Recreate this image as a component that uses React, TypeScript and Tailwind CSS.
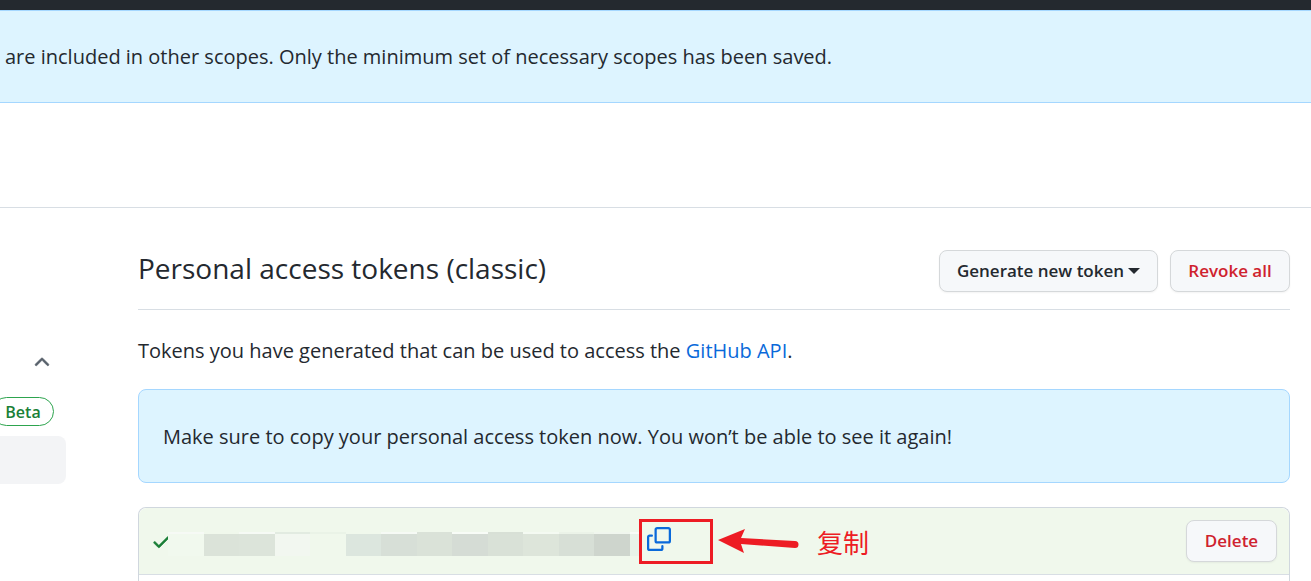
import React from "react";

const tiles = [
  { strip: "bg-[#f6faf5]", body: "bg-[#f1f9ee]" },
  { strip: "bg-[#f0f8ec]", body: "bg-[#dbe3d9]" },
  { strip: "bg-[#f6faf5]", body: "bg-[#dce4da]" },
  { strip: "bg-[#e2ebe1]", body: "bg-[#f2f7f0]" },
  { strip: "bg-[#eaf3e7]", body: "bg-[#f0f8ec]" },
  { strip: "bg-[#f0f8ec]", body: "bg-[#dce6de]" },
  { strip: "bg-[#f6faf5]", body: "bg-[#d7dfd7]" },
  { strip: "bg-[#dae2d8]", body: "bg-[#dae2d8]" },
  { strip: "bg-[#f8fcf7]", body: "bg-[#d5dcd5]" },
  { strip: "bg-[#d8e0d6]", body: "bg-[#d9e1d7]" },
  { strip: "bg-[#f4faf2]", body: "bg-[#dde5da]" },
  { strip: "bg-[#ebf3e8]", body: "bg-[#d7dfd6]" },
  { strip: "bg-[#f0f6ee]", body: "bg-[#ced5cd]" },
];

const buttonBase =
  "flex h-[42px] items-center justify-center rounded-lg border border-[#d5d8da] bg-[#f6f8fa] text-[17px] font-semibold shadow-xs";

function MaskedToken() {
  return (
    <div className="flex w-[471px] shrink-0" aria-hidden="true">
      <div className="flex w-[462px] shrink-0">
        {tiles.map((tile, i) => (
          <div key={i} className="flex h-6 flex-1 flex-col">
            <div className={`h-[2px] ${tile.strip}`} />
            <div className={`flex-1 ${tile.body}`} />
          </div>
        ))}
      </div>
      <div className="flex flex-1 flex-col">
        <div className="h-[2px] bg-[#f8fcf7]" />
        <div className="flex-1 bg-[#e8f3e9]" />
      </div>
    </div>
  );
}

export default function App() {
  return (
    <div className="min-h-screen overflow-x-hidden bg-white font-['Open_Sans','Noto_Sans_CJK_SC',sans-serif] text-[20px] leading-8 text-[#24292f]">
      <header className="h-[10px] bg-[#24292f]" />
      <div className="border-y border-[#a5d7ff] bg-[#ddf4ff] pt-[30px] pb-[29px] pl-[5px] whitespace-nowrap">
        are included in other scopes. Only the minimum set of necessary scopes has been saved.
      </div>
      <div className="h-[104px]" />
      <div className="flex gap-[72px] border-t border-[#d8dee4] pr-[21px]">
        <nav className="w-[66px] shrink-0 pt-[142px]" aria-label="Settings">
          <button className="ml-[31px] block h-[26px]" aria-label="Collapse section">
            <svg width="22" height="22" viewBox="0 0 16 16" fill="#57606a" stroke="#57606a" strokeWidth="0.4">
              <path d="M3.22 9.78a.75.75 0 010-1.06l4.25-4.25a.75.75 0 011.06 0l4.25 4.25a.75.75 0 01-1.06 1.06L8 6.06 4.28 9.78a.75.75 0 01-1.06 0z" />
            </svg>
          </button>
          <span className="mt-[21px] -ml-2 flex h-[29px] w-[62px] items-center justify-center rounded-full border border-[#2da44e] text-base font-semibold text-[#1a7f37]">
            Beta
          </span>
          <div className="mt-[10px] h-12 rounded-r-lg bg-[#f3f4f6]" />
        </nav>
        <main className="min-w-0 flex-1 pt-[42px]">
          <div className="flex h-[60px] items-start justify-between border-b border-[#d8dee4]">
            <h1 className="text-[28px] leading-9 whitespace-nowrap">Personal access tokens (classic)</h1>
            <div className="flex shrink-0 gap-3">
              <button className={`${buttonBase} w-[219px] gap-1 whitespace-nowrap`}>
                Generate new token
                <svg width="12" height="6" viewBox="0 0 12 6" fill="#24292f">
                  <path d="M0 0h12L6 6z" />
                </svg>
              </button>
              <button className={`${buttonBase} w-[120px] whitespace-nowrap text-[#cf222e]`}>Revoke all</button>
            </div>
          </div>
          <p className="mt-[25px] whitespace-nowrap">
            Tokens you have generated that can be used to access the{" "}
            <a href="#api" className="text-[#0969da]">GitHub API</a>.
          </p>
          <div className="mt-[22px] rounded-lg border border-[#a5d7ff] bg-[#ddf4ff] px-6 pt-[31px] pb-[29px] whitespace-nowrap">
            Make sure to copy your personal access token now. You won’t be able to see it again!
          </div>
          <div className="mt-6 rounded-t-lg border border-b-0 border-[#d0d7de]">
            <div className="flex h-[67px] items-center rounded-t-lg border-b border-[#d8dee4] bg-[#f0f8ec] pr-3">
              <svg className="ml-3 shrink-0" width="21" height="21" viewBox="0 0 16 16" fill="#1a7f37" stroke="#1a7f37" strokeWidth="0.4" aria-label="Created">
                <path d="M13.78 4.22a.75.75 0 010 1.06l-7.25 7.25a.75.75 0 01-1.06 0L2.22 9.28a.75.75 0 011.06-1.06L6 10.94l6.72-6.72a.75.75 0 011.06 0z" />
              </svg>
              <div className="-ml-1 pt-[6px]">
                <MaskedToken />
              </div>
              <button className="flex h-[45px] w-[74px] shrink-0 items-start border-3 border-[#ed1c24] pt-[5px] pl-[5px]" aria-label="Copy token">
                <svg width="24" height="24" viewBox="0 0 16 16" fill="#0969da">
                  <path d="M0 6.75C0 5.784.784 5 1.75 5h1.5a.75.75 0 010 1.5h-1.5a.25.25 0 00-.25.25v7.5c0 .138.112.25.25.25h7.5a.25.25 0 00.25-.25v-1.5a.75.75 0 011.5 0v1.5A1.75 1.75 0 019.25 16h-7.5A1.75 1.75 0 010 14.25z" />
                  <path d="M5 1.75C5 .784 5.784 0 6.75 0h7.5C15.216 0 16 .784 16 1.75v7.5A1.75 1.75 0 0114.25 11h-7.5A1.75 1.75 0 015 9.25zm1.75-.25a.25.25 0 00-.25.25v7.5c0 .138.112.25.25.25h7.5a.25.25 0 00.25-.25v-7.5a.25.25 0 00-.25-.25z" />
                </svg>
              </button>
              <svg className="ml-1 shrink-0" width="84" height="28" viewBox="0 0 84 28" fill="#ed1c24">
                <path d="M1 13 28 2l-4 9 54 3a3.500 3.500 0 0 1 0 7l-54-4 3 9z" />
              </svg>
              <span className="ml-4 shrink-0 pt-1 text-[26px] text-[#ed1c24]">复制</span>
              <button className={`${buttonBase} ml-auto w-[91px] text-[#cf222e]`}>Delete</button>
            </div>
            <div className="h-[6px]" />
          </div>
        </main>
      </div>
    </div>
  );
}
